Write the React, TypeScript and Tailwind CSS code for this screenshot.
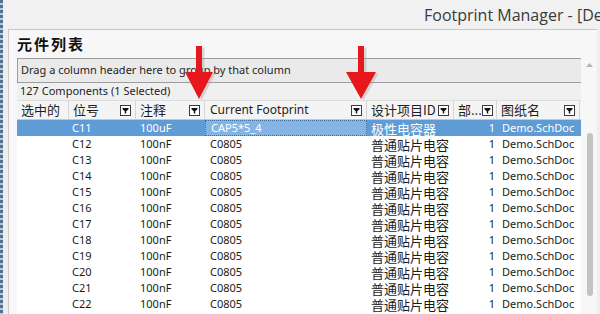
import React from "react";

const LATIN = "font-['Noto_Sans','Noto_Sans_CJK_SC',sans-serif]";
const CJK = "font-['Noto_Sans_CJK_SC',sans-serif]";

type Row = { ref: string; comment: string; fp: string; id: string; part: string; sheet: string };

const rows: Row[] = [
  { ref: "C11", comment: "100uF", fp: "CAP5*5_4", id: "极性电容器", part: "1", sheet: "Demo.SchDoc" },
  ...["C12", "C13", "C14", "C15", "C16", "C17", "C18", "C19", "C20", "C21", "C22", "C23"].map(r => ({
    ref: r, comment: "100nF", fp: "C0805", id: "普通贴片电容", part: "1", sheet: "Demo.SchDoc",
  })),
];

/* 列头上的小漏斗按钮 */
function FilterBtn() {
  return (
    <svg width="11" height="11" viewBox="0 0 11 11" className="shrink-0">
      <rect x="0.5" y="0.5" width="10" height="10" fill="#fff" stroke="#3c3c3c" />
      <path d="M2.5 3h6v1.3L6.2 6.2V8.5H4.8V6.2L2.5 4.3z" fill="#111" />
    </svg>
  );
}

function HeadCell({ label, w, filter = true, cjk = true }: { label: string; w: string; filter?: boolean; cjk?: boolean }) {
  return (
    <div className={`${w} h-full flex items-center justify-between pl-[4px] pr-[4px] border-r border-[#d6d6d6]`}>
      <span className={`${cjk ? "text-[13px] leading-[16px] " + CJK : "text-[12px] pl-[1px] " + LATIN} text-[#1e1e1e] whitespace-nowrap`}>{label}</span>
      {filter && <FilterBtn />}
    </div>
  );
}

function RedArrow({ left, top, head }: { left: number; top: number; head: number }) {
  const w = head;
  return (
    <svg
      className="absolute pointer-events-none"
      style={{ left, top }}
      width={w + 4}
      height={56}
      viewBox={`0 0 ${w + 4} 56`}
    >
      <path
        d={`M${w / 2 - 3 + 1} 0h6v${26}h${w / 2 - 3}L${w / 2 + 1} 53L1 26h${w / 2 - 3}z`}
        fill="#9a9a9a"
        opacity="0.35"
        transform="translate(1.5,1.5)"
      />
      <path d={`M${w / 2 - 3} 0h6v${26}h${w / 2 - 3}L${w / 2} 53L0 26h${w / 2 - 3}z`} fill="#e8171c" />
    </svg>
  );
}

export default function App() {
  return (
    <div className={`relative w-[600px] h-[314px] overflow-hidden bg-[#eeeeee] flex ${LATIN}`}>
      {/* 窗口左侧边框 */}
      <div className="w-[3px] h-full bg-[repeating-linear-gradient(180deg,#4f7396_0px,#4f7396_3px,#b9c8d6_3px,#b9c8d6_5px)]" />
      <div className="flex-1 flex flex-col min-w-0">
        {/* 标题栏 */}
        <div className="h-[29px] shrink-0 flex items-center pl-[421px] bg-[#f1f1f1] overflow-hidden">
          <span className="text-[16px] text-[#3a3a3a] whitespace-nowrap font-['Open_Sans',sans-serif]">
            Footprint Manager - [Demo.PrjPcb]
          </span>
        </div>

        <div className="flex-1 flex min-h-0 pl-[5px]">
          <div className="flex-1 flex flex-col min-h-0 bg-[#f7f7f7] border-l border-t border-[#c9c9c9]">
            <div className={`h-[28px] shrink-0 flex items-center pl-[8px] text-[15px] font-bold tracking-[2px] text-[#111] ${CJK}`}>
              元件列表
            </div>

            <div className="flex-1 flex min-h-0 pl-[8px]">
              <div className="flex-1 flex flex-col min-h-0 min-w-0">
                {/* 分组区 */}
                <div className="h-[25px] shrink-0 flex items-center pl-[3px] bg-[#eaeaea] border border-[#9d9d9d] text-[11px] text-[#1e1e1e] mr-[-4px]">
                  Drag a column header here to group by that column
                </div>
                {/* 状态 */}
                <div className="h-[17px] shrink-0 flex items-center pl-[3px] bg-[#f0f0f0] text-[11px] text-[#1e1e1e]">
                  127 Components (1 Selected)
                </div>
                {/* 表头 */}
                <div className="h-[20px] shrink-0 flex bg-[#f4f4f4] border-t border-[#dcdcdc] border-b border-b-[#c8c8c8]">
                  <HeadCell label="选中的" w="w-[52px]" filter={false} />
                  <HeadCell label="位号" w="w-[67px]" />
                  <HeadCell label="注释" w="w-[69px]" />
                  <HeadCell label="Current Footprint" w="w-[162px]" cjk={false} />
                  <HeadCell label="设计项目ID" w="w-[87px]" />
                  <HeadCell label="部..." w="w-[43px]" />
                  <HeadCell label="图纸名" w="w-[83px]" />
                </div>
                {/* 数据行 */}
                <div className="flex-1 min-h-0 overflow-hidden bg-white">
                  {rows.map((r, i) => {
                    const sel = i === 0;
                    const txt = sel ? "text-white" : "text-[#1a1a1a]";
                    return (
                      <div key={r.ref} className={`h-[16px] flex items-center text-[11px] leading-[16px] ${sel ? "bg-[#5f9bd4]" : ""} ${txt}`}>
                        <div className="w-[52px]" />
                        <div className="w-[67px] pl-[3px]">{r.ref}</div>
                        <div className="w-[69px] pl-[4px]">{r.comment}</div>
                        <div
                          className={`w-[162px] h-full flex items-center pl-[5px] ${
                            sel ? "bg-[#84b4e4] border border-dotted border-[#3d6fa3]" : ""
                          }`}
                        >
                          {r.fp}
                        </div>
                        <div className={`w-[87px] pl-[4px] text-[13px] leading-[15px] whitespace-nowrap ${CJK}`}>{r.id}</div>
                        <div className="w-[43px] pr-[2px] text-right">{r.part}</div>
                        <div className="w-[83px] pl-[5px] whitespace-nowrap">{r.sheet}</div>
                      </div>
                    );
                  })}
                </div>
              </div>

              {/* 竖向滚动条 */}
              <div className="w-[16px] shrink-0 flex flex-col items-center bg-[#f7f7f7] pt-[4px]">
                <svg width="7" height="5" viewBox="0 0 7 5">
                  <path d="M0 5L3.5 1L7 5z" fill="#b5b5b5" />
                </svg>
                <div className="mt-[66px] w-[6px] h-[163px] rounded-[3px] bg-[#c3c3c3] ml-[1px]" />
              </div>
            </div>
          </div>
          <div className="w-[3px]" />
        </div>
      </div>

      <RedArrow left={185} top={46} head={28} />
      <RedArrow left={346} top={46} head={30} />
    </div>
  );
}
